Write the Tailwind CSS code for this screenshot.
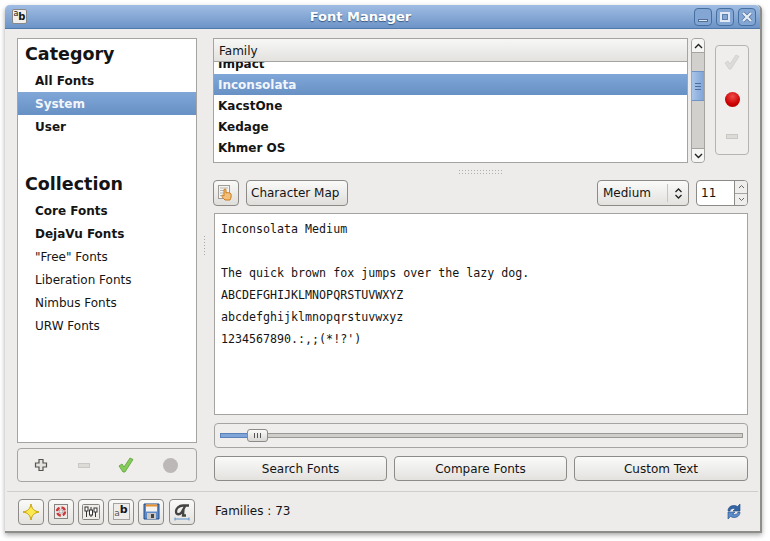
<!DOCTYPE html>
<html><head><meta charset="utf-8"><script src="https://cdn.jsdelivr.net/npm/@tailwindcss/browser@4"></script></head>
<body class="bg-white w-[770px] h-[541px] overflow-hidden font-['DejaVu_Sans',sans-serif] text-[12px] text-[#141414]">
<div class="ml-[5px] mt-[5px] w-[757px] h-[528px] flex flex-col bg-[#edecea] rounded-t-[5px] border-r-2 border-b-2 border-[#8d8d8a] shadow-[0_2px_5px_rgba(0,0,0,0.35)] relative">
  <!-- title bar -->
  <div class="h-[24px] shrink-0 flex items-center bg-gradient-to-b from-[#a0bde3] to-[#6d94c7] border-b border-[#4f79ad] rounded-t-[5px] pl-[7px] pr-[4px]">
    <div class="w-[15px] h-[15px] bg-[#f0efec] border border-[#888] rounded-[2px] flex justify-center leading-none"><span class="text-[8px] leading-none">a</span><span class="text-[10px] font-bold leading-none relative top-[2px]">b</span></div>
    <div class="flex-1 text-center text-white font-bold text-[13px] [text-shadow:0_1px_1px_rgba(40,70,110,0.8)]">Font Manager</div>
    <div class="flex gap-[4px]">
      <div class="w-[18px] h-[18px] rounded-[4px] border border-[#456f9f] bg-[#83a6d4] flex items-end justify-center pb-[3px]"><div class="w-[10px] h-[3px] bg-[#dfe8f4] border-[0.5px] border-[#4f6f99]"></div></div>
      <div class="w-[18px] h-[18px] rounded-[4px] border border-[#456f9f] bg-[#83a6d4] flex items-center justify-center"><div class="w-[10px] h-[10px] border-2 border-[#dfe8f4] outline outline-[#5d7fa9] -outline-offset-[3px]"></div></div>
      <div class="w-[18px] h-[18px] rounded-[4px] border border-[#456f9f] bg-[#83a6d4] flex items-center justify-center"><svg width="12" height="12" viewBox="0 0 12 12"><path d="M2 2 10 10M10 2 2 10" stroke="#4f6f99" stroke-width="3.6"/><path d="M2 2 10 10M10 2 2 10" stroke="#e6edf6" stroke-width="2.4"/></svg></div>
    </div>
  </div>
  <!-- body -->
  <div class="flex flex-1 min-h-0 pt-[9px] pl-[12px]">
    <!-- left column -->
    <div class="w-[180px] shrink-0 flex flex-col">
      <div class="h-[405px] bg-white border border-[#a5a4a0] flex flex-col">
        <div class="font-bold text-[17.5px] leading-[24px] pl-[7px] pt-[3px] h-[30px]">Category</div>
        <div class="font-bold h-[23px] leading-[25px] pl-[17px]">All Fonts</div>
        <div class="font-bold h-[23px] leading-[25px] pl-[17px] text-[#f2f5fa] bg-gradient-to-b from-[#80a7d8] to-[#6790c4]">System</div>
        <div class="font-bold h-[23px] leading-[25px] pl-[17px]">User</div>
        <div class="font-bold text-[17.5px] leading-[24px] pl-[7px] mt-[34px] h-[27px]">Collection</div>
        <div class="font-bold h-[23px] leading-[25px] pl-[17px]">Core Fonts</div>
        <div class="font-bold h-[23px] leading-[25px] pl-[17px]">DejaVu Fonts</div>
        <div class="h-[23px] leading-[25px] pl-[17px]">"Free" Fonts</div>
        <div class="h-[23px] leading-[25px] pl-[17px]">Liberation Fonts</div>
        <div class="h-[23px] leading-[25px] pl-[17px]">Nimbus Fonts</div>
        <div class="h-[23px] leading-[25px] pl-[17px]">URW Fonts</div>
      </div>
      <div class="mt-[5px] h-[34px] border border-[#a5a4a0] rounded-[4px] flex items-center pl-[16px] bg-[#efeeec]">
        <svg width="14" height="14" viewBox="0 0 14 14"><path d="M5 1.500h4v3.500h3.500v4H9v3.500H5V9H1.500V5H5z" fill="#e4e3e0" stroke="#55534f" stroke-width="1.200"/></svg>
        <div class="ml-[30px] w-[12px] h-[5px] bg-[#dcdbd8] border border-[#c9c8c5]"></div>
        <svg class="ml-[27px]" width="18" height="18" viewBox="0 0 18 18"><path d="M2 10l3-2 2 3 6-9 3 1.500-8 12.500H6z" fill="#86cc5a" stroke="#5d9e37" stroke-width="0.800"/></svg>
        <div class="ml-[28px] w-[15px] h-[15px] rounded-full bg-[#bdb8b8]"></div>
      </div>
    </div>
    <!-- splitter -->
    <div class="w-[16px] shrink-0 flex items-center justify-center"><div class="w-[4px] h-[20px] bg-[radial-gradient(circle,#a8a7a3_1px,transparent_1px)] bg-[length:3px_3px] relative top-[-20px]"></div></div>
    <!-- right column -->
    <div class="w-[536px] shrink-0 flex flex-col">
      <!-- top row -->
      <div class="flex h-[125px]">
        <div class="w-[475px] border border-[#a5a4a0] bg-white flex flex-col overflow-hidden">
          <div class="h-[23px] shrink-0 bg-gradient-to-b from-[#f7f7f6] to-[#e3e2df] border-b border-[#a5a4a0] pl-[5px] leading-[24px] relative z-10">Family</div>
          <div class="font-bold h-[12px] relative"><div class="absolute bottom-[-1px] left-[4px] leading-[21px]">Impact</div></div>
          <div class="font-bold h-[21px] leading-[23px] pl-[4px] text-[#f2f5fa] bg-gradient-to-b from-[#80a7d8] to-[#6790c4] relative">Inconsolata</div>
          <div class="font-bold h-[21px] leading-[23px] pl-[4px]">KacstOne</div>
          <div class="font-bold h-[21px] leading-[23px] pl-[4px]">Kedage</div>
          <div class="font-bold h-[21px] leading-[23px] pl-[4px]">Khmer OS</div>
        </div>
        <div class="w-[14px] ml-[3px] border border-[#a5a4a0] rounded-[4px] bg-[#d1d0cd] flex flex-col overflow-hidden">
          <div class="h-[14px] bg-[#f6f6f5] border-b border-[#a5a4a0] flex items-center justify-center"><svg width="9" height="6" viewBox="0 0 9 6"><path d="M1 5 4.500 1.500 8 5" fill="none" stroke="#222" stroke-width="1.400"/></svg></div>
          <div class="h-[18px]"></div>
          <div class="h-[30px] bg-gradient-to-r from-[#a9c4e8] to-[#7ea4d6] border-y border-[#6f93c4] flex flex-col items-center justify-center gap-[2px]"><div class="w-[6px] h-px bg-[#4c6f9f]"></div><div class="w-[6px] h-px bg-[#4c6f9f]"></div><div class="w-[6px] h-px bg-[#4c6f9f]"></div></div>
          <div class="flex-1"></div>
          <div class="h-[14px] bg-[#f6f6f5] border-t border-[#a5a4a0] flex items-center justify-center"><svg width="9" height="6" viewBox="0 0 9 6"><path d="M1 1 4.500 4.500 8 1" fill="none" stroke="#222" stroke-width="1.400"/></svg></div>
        </div>
        <div class="w-[34px] h-[110px] mt-[7px] ml-[10px] border border-[#b5b4b0] rounded-[4px] flex flex-col items-center pt-[7px] bg-[#efeeec]">
          <svg width="18" height="18" viewBox="0 0 18 18"><path d="M2 10l3-2 2 3 6-9 3 1.500-8 12.500H6z" fill="#dcdbd8" stroke="#cfcecb" stroke-width="0.800"/></svg>
          <div class="mt-[21px] w-[15px] h-[15px] rounded-full bg-[radial-gradient(circle_at_50%_30%,#f04a4a,#cc0000_60%,#a50000)]"></div>
          <div class="mt-[27px] w-[12px] h-[5px] bg-[#dcdbd8] border border-[#c9c8c5]"></div>
        </div>
      </div>
      <!-- horizontal grip -->
      <div class="h-[17px] flex items-center justify-center"><div class="w-[46px] h-[5px] bg-[radial-gradient(circle,#b0afab_1px,transparent_1px)] bg-[length:3px_3px]"></div></div>
      <!-- tool row -->
      <div class="h-[26px] flex items-center mr-[1px]">
        <div class="w-[26px] h-[26px] border border-[#8c8b88] rounded-[4px] bg-gradient-to-b from-[#fafaf9] to-[#dfdedb] flex items-center justify-center"><svg width="18" height="18" viewBox="0 0 18 18"><rect x="1.500" y="1.500" width="11" height="13" fill="#f4f3ef" stroke="#9d9c98"/><path d="M3 4h8M3 6.500h4M3 9h4M3 11.500h4" stroke="#b5b4b0"/><path d="M8 16c-2-2-3-3-3-4s1-1 2 0V6c0-1.500 2-1.500 2 0v3c1-.6 4.500-.5 5 1 .5 2 0 4-1 6z" fill="#f3c07a" stroke="#c87a1d"/></svg></div>
        <div class="ml-[7px] w-[102px] h-[26px] border border-[#8c8b88] rounded-[4px] bg-gradient-to-b from-[#fafaf9] to-[#dfdedb] pl-[4px] leading-[24px]">Character Map</div>
        <div class="ml-auto w-[92px] h-[26px] border border-[#8c8b88] rounded-[4px] bg-gradient-to-b from-[#fafaf9] to-[#e3e2df] flex items-center pl-[5px]"><span class="flex-1">Medium</span><div class="w-px h-[18px] bg-[#c6c5c2]"></div><div class="w-[20px] flex justify-center"><svg width="9" height="13" viewBox="0 0 9 13"><path d="M1.500 5 4.500 2 7.500 5M1.500 8 4.500 11 7.500 8" fill="none" stroke="#222" stroke-width="1.300"/></svg></div></div>
        <div class="ml-[7px] w-[52px] h-[26px] border border-[#8c8b88] rounded-[4px] bg-white flex">
          <div class="flex-1 pl-[4px] leading-[24px]">11</div>
          <div class="w-[13px] border-l border-[#8c8b88] bg-[#efeeec] flex flex-col rounded-r-[3px] overflow-hidden">
            <div class="flex-1 flex items-center justify-center border-b border-[#a5a4a0]"><svg width="7" height="5" viewBox="0 0 7 5"><path d="M1 4 3.500 1.500 6 4" fill="none" stroke="#666" stroke-width="1"/></svg></div>
            <div class="flex-1 flex items-center justify-center"><svg width="7" height="5" viewBox="0 0 7 5"><path d="M1 1 3.500 3.500 6 1" fill="none" stroke="#666" stroke-width="1"/></svg></div>
          </div>
        </div>
      </div>
      <!-- preview -->
      <div class="mt-[7px] mx-[1px] h-[202px] border border-[#a5a4a0] bg-white font-['DejaVu_Sans_Mono',monospace] text-[11.65px] leading-[22px] pl-[6px] pt-[4px]"><div>Inconsolata Medium</div><div>&nbsp;</div><div>The quick brown fox jumps over the lazy dog.</div><div>ABCDEFGHIJKLMNOPQRSTUVWXYZ</div><div>abcdefghijklmnopqrstuvwxyz</div><div>1234567890.:,;(*!?')</div></div>
      <!-- slider -->
      <div class="mt-[8px] ml-[1px] mr-[1px] h-[25px] border border-[#a5a4a0] rounded-[4px] bg-[#efeeec] flex items-center pl-[5px] pr-[4px] relative">
        <div class="w-full h-[5px] bg-[#cfcecb] border border-[#9a9996]"></div>
        <div class="absolute left-[5px] top-[9px] w-[28px] h-[5px] bg-[#7fa5d8] border border-[#5a82b8]"></div>
        <div class="absolute left-[32px] top-[5px] w-[21px] h-[13px] border border-[#8c8b88] rounded-[3px] bg-gradient-to-b from-[#fafaf9] to-[#d9d8d5] flex items-center justify-center gap-[2px]"><div class="w-px h-[5px] bg-[#555]"></div><div class="w-px h-[5px] bg-[#555]"></div><div class="w-px h-[5px] bg-[#555]"></div></div>
      </div>
      <!-- buttons -->
      <div class="mt-[8px] ml-[1px] mr-[1px] h-[25px] flex gap-[7px]">
        <div class="w-[173px] border border-[#8c8b88] rounded-[4px] bg-gradient-to-b from-[#fafaf9] to-[#e3e2df] text-center leading-[25px]">Search Fonts</div>
        <div class="w-[173px] border border-[#8c8b88] rounded-[4px] bg-gradient-to-b from-[#fafaf9] to-[#e3e2df] text-center leading-[25px]">Compare Fonts</div>
        <div class="w-[174px] border border-[#8c8b88] rounded-[4px] bg-gradient-to-b from-[#fafaf9] to-[#e3e2df] text-center leading-[25px]">Custom Text</div>
      </div>
    </div>
  </div>
  <!-- separator -->
  <div class="h-px bg-[#cfcecb] mx-[2px] mb-[6px]"></div>
  <!-- status bar -->
  <div class="h-[27px] mb-[6px] shrink-0 flex items-center pl-[13px] pr-[18px]">
    <div class="flex gap-[4px]">
      <div class="w-[26px] h-[26px] border border-[#8c8b88] rounded-[4px] bg-gradient-to-b from-[#fafaf9] to-[#e3e2df] flex items-center justify-center"><svg width="18" height="18" viewBox="0 0 18 18"><path d="M9 1c1 5 3 7 8 8-5 1-7 3-8 8-1-5-3-7-8-8 5-1 7-3 8-8z" fill="#fce94f" stroke="#c4a000"/></svg></div>
      <div class="w-[26px] h-[26px] border border-[#8c8b88] rounded-[4px] bg-gradient-to-b from-[#fafaf9] to-[#e3e2df] flex items-center justify-center"><svg width="16" height="17" viewBox="0 0 16 17"><rect x="1.500" y="1.500" width="13" height="14" fill="#eeedea" stroke="#85847f"/><circle cx="8" cy="8.500" r="4" fill="#fff" stroke="#e8e6e3" stroke-width="2.400"/><circle cx="8" cy="8.500" r="4" fill="none" stroke="#cc3b3b" stroke-width="2.400" stroke-dasharray="4.300 2"/><circle cx="8" cy="8.500" r="1.800" fill="#eee" stroke="#888" stroke-width=".7"/></svg></div>
      <div class="w-[26px] h-[26px] border border-[#8c8b88] rounded-[4px] bg-gradient-to-b from-[#fafaf9] to-[#e3e2df] flex items-center justify-center"><svg width="18" height="16" viewBox="0 0 18 16"><rect x=".5" y=".5" width="17" height="15" rx="1" fill="#eeedea" stroke="#85847f"/><rect x="3" y="3" width="3" height="4" fill="#fff" stroke="#333"/><rect x="7.500" y="6" width="3" height="5" fill="#fff" stroke="#333"/><rect x="12" y="4" width="3" height="4" fill="#fff" stroke="#333"/><path d="M4.500 7v6M9 3v3M9 11v2M13.500 8v5" stroke="#333"/></svg></div>
      <div class="w-[26px] h-[26px] border border-[#8c8b88] rounded-[4px] bg-gradient-to-b from-[#fafaf9] to-[#e3e2df] flex items-center justify-center"><div class="w-[17px] h-[17px] bg-[#eeedea] border border-[#a5a4a0] flex items-end justify-center leading-none pb-[1px]"><span class="text-[9px] text-[#555]">a</span><span class="text-[11px] font-bold relative top-[-3px]">b</span></div></div>
      <div class="w-[26px] h-[26px] border border-[#8c8b88] rounded-[4px] bg-gradient-to-b from-[#fafaf9] to-[#e3e2df] flex items-center justify-center"><svg width="17" height="17" viewBox="0 0 17 17"><path d="M1 1h15v15H1z" fill="#5e8bc7" stroke="#204a87"/><rect x="3" y="1.500" width="11" height="7" fill="#f4f3ef"/><rect x="3" y="1.500" width="11" height="2" fill="#e8902a"/><rect x="4" y="10" width="9" height="6" fill="#c9c8c4"/><rect x="8" y="11" width="3" height="4" fill="#444"/></svg></div>
      <div class="w-[26px] h-[26px] ml-[1px] border border-[#8c8b88] rounded-[4px] bg-gradient-to-b from-[#fafaf9] to-[#e3e2df] flex items-center justify-center"><svg width="18" height="18" viewBox="0 0 18 18"><path d="M16 2.500H10C6 2.500 3 5.500 3 8.500 3 12 6.500 12 8.500 9.500L12.500 2.500M10.500 6.500 10 12.500H13" fill="none" stroke="#444" stroke-width="2.300"/><path d="M2 16h14M2 14.500v3M16 14.500v3" stroke="#5b8fc9"/></svg></div>
    </div>
    <div class="ml-[20px] leading-[14px] relative top-[-1px]">Families : 73</div>
    <svg class="ml-auto" width="16" height="17" viewBox="0 0 16 17"><path d="M2 8C2 4 5 2.500 8 2.500c1.500 0 2.500.5 3.500 1L14 1v7H7l2.400-2.300C7 4.800 4 6 4 8z" fill="#3465a4" stroke="#204a87" stroke-width=".6"/><path d="M14 9c0 4-3 5.500-6 5.500-1.500 0-2.500-.5-3.500-1L2 16V9h7l-2.400 2.300C9 12.200 12 11 12 9z" fill="#5c8ccb" stroke="#204a87" stroke-width=".6"/></svg>
  </div>
</div>
</body></html>
